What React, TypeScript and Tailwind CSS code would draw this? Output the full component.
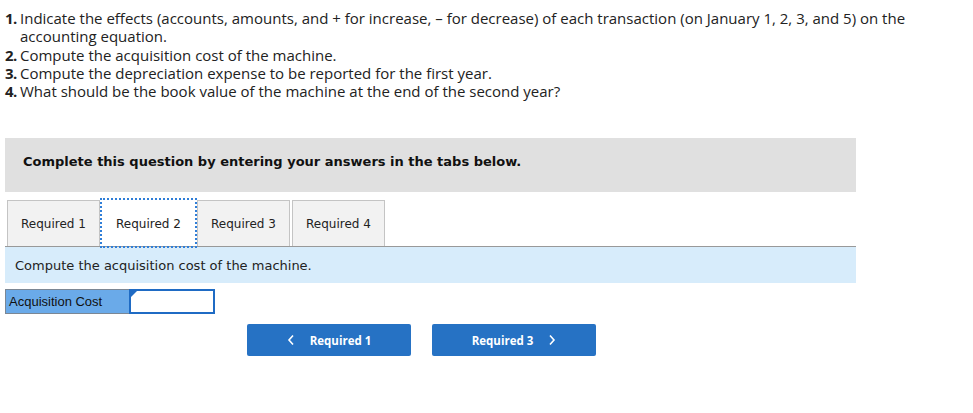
import React from "react";

const items: [string, string][] = [
  ["1.", "Indicate the effects (accounts, amounts, and + for increase, \u2013 for decrease) of each transaction (on January 1, 2, 3, and 5) on the accounting equation."],
  ["2.", "Compute the acquisition cost of the machine."],
  ["3.", "Compute the depreciation expense to be reported for the first year."],
  ["4.", "What should be the book value of the machine at the end of the second year?"],
];

export default function App() {
  return (
    <div className="w-[973px] h-[413px] bg-white overflow-hidden">
      <div className="pt-[9px] pl-[5px] pr-[50px] text-[15px] leading-[18.3px] text-[#222]" style={{ fontFamily: "'Open Sans', sans-serif" }}>
        {items.map(([n, t]) => (
          <div key={n} className="flex">
            <span className="font-bold w-[15px] shrink-0 tracking-[-0.5px]">{n}</span>
            <span>{t}</span>
          </div>
        ))}
      </div>

      <div className="ml-[5px] w-[851px] mt-[38px]" style={{ fontFamily: "'DejaVu Sans', Verdana, sans-serif" }}>
        <div className="h-[54px] bg-[#e0e0e0] pt-[14px] pl-[18px] text-[13px] font-bold text-[#111]">
          Complete this question by entering your answers in the tabs below.
        </div>

        <div className="mt-[8px] flex gap-[2px] pl-[2px] h-[47px] border-b border-[#999]">
          <div className="w-[93px] h-full bg-[#f2f2f2] border border-b-0 border-[#c4c4c4] flex items-center justify-center text-[12px] text-[#222]">Required 1</div>
          <div className="w-[93px] h-full bg-white outline-2 outline-dotted outline-[#2f7ed8] flex items-center justify-center text-[12px] text-[#222] relative z-10 mb-[-1px] pt-[1px]">Required 2</div>
          <div className="w-[93px] h-full bg-[#f2f2f2] border border-b-0 border-[#c4c4c4] flex items-center justify-center text-[12px] text-[#222]">Required 3</div>
          <div className="w-[93px] h-full bg-[#f2f2f2] border border-b-0 border-[#c4c4c4] flex items-center justify-center text-[12px] text-[#222]">Required 4</div>
        </div>

        <div className="h-[36px] bg-[#d7ecfb] flex items-center pl-[10px] text-[13px] text-[#222]">
          Compute the acquisition cost of the machine.
        </div>

        <div className="mt-[6px] flex h-[25px]">
          <div className="w-[125px] h-full bg-[#6aaae9] border border-[#7b8794] flex items-center pl-[3px] text-[13px] text-[#111]" style={{ fontFamily: "'Liberation Sans', Arial, sans-serif" }}>
            Acquisition Cost
          </div>
          <div className="relative w-[86px] h-full bg-white border-2 border-[#1f6bc4] -ml-[1px]">
            <svg className="absolute left-0 top-0" width="6" height="6" viewBox="0 0 6 6">
              <polygon points="0,0 6,0 0,6" fill="#1f6bc4" />
            </svg>
          </div>
        </div>

        <div className="mt-[10px] flex gap-[21px] pl-[242px]" style={{ fontFamily: "'Open Sans', sans-serif" }}>
          <button className="w-[164px] h-[32px] bg-[#2672c4] rounded-[2px] flex items-center justify-center text-white text-[11.5px] font-bold">
            <svg width="8" height="12" viewBox="0 0 8 12" className="mr-[15px]">
              <path d="M6 1.5 L2 6 L6 10.5" stroke="white" strokeWidth="1.6" fill="none" />
            </svg>
            Required 1
          </button>
          <button className="w-[164px] h-[32px] bg-[#2672c4] rounded-[2px] flex items-center justify-center text-white text-[11.5px] font-bold">
            Required 3
            <svg width="8" height="12" viewBox="0 0 8 12" className="ml-[15px]">
              <path d="M2 1.5 L6 6 L2 10.5" stroke="white" strokeWidth="1.6" fill="none" />
            </svg>
          </button>
        </div>
      </div>
    </div>
  );
}
